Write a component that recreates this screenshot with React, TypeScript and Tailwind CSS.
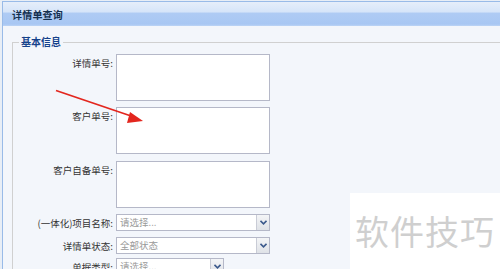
import React from 'react';

const font = { fontFamily: '"Noto Sans CJK SC", "Liberation Sans", sans-serif' };

const Label: React.FC<{ text: string }> = ({ text }) => (
  <div className="w-[100px] shrink-0 text-right text-[9.5px] leading-[12px] text-[#333] pt-[3px]">{text}</div>
);

const Chevron: React.FC = () => (
  <svg width="7" height="5" viewBox="0 0 7 5">
    <path d="M0.5 0.8 L3.5 3.8 L6.5 0.8" fill="none" stroke="#3c5a8c" strokeWidth="1.6" />
  </svg>
);

const Select: React.FC<{ text: string; wide?: boolean }> = ({ text, wide = true }) => (
  <div className={`${wide ? 'w-[154px]' : 'w-[108px]'} h-[17px] flex border border-[#b5b8c8] bg-white`}>
    <div className="flex-1 pl-[3px] text-[9.5px] leading-[15px] text-[#9a9a9a]">{text}</div>
    <div className="w-[13px] flex items-center justify-center border-l border-[#c9ccd6] bg-[linear-gradient(#f4f5f7,#dfe2e7)]">
      <Chevron />
    </div>
  </div>
);

const TextBox: React.FC = () => (
  <div className="w-[154px] h-[47px] border border-[#b5b8c8] bg-white" />
);

export default function App() {
  return (
    <div className="relative w-[500px] h-[269px] overflow-hidden bg-[#e8eef6]" style={font}>
      <div className="ml-[2px] mt-[1px] w-[520px] h-[268px] border-l border-t border-[#99bbe8] bg-[#f3f6fb]">
        {/* title bar */}
        <div className="h-[24px] flex items-center pl-[9px] bg-[linear-gradient(#e6eefa_0%,#d6e5f9_40%,#aecbf4_48%,#a8c7f3_92%,#bcd4f5_100%)]">
          <span className="text-[10px] font-bold text-[#15304f] tracking-[0.2px]">详情单查询</span>
        </div>

        <fieldset className="ml-[9px] mt-[9px] border border-[#d0d0d0] pb-[20px]">
          <legend className="ml-[6px] px-[2px] text-[10px] leading-[14px] font-bold text-[#15428b]">基本信息</legend>
          <div className="flex flex-col pt-[5px]">
            <div className="flex">
              <Label text="详情单号:" />
              <div className="ml-[3px]"><TextBox /></div>
            </div>
            <div className="flex mt-[6px]">
              <Label text="客户单号:" />
              <div className="ml-[3px]"><TextBox /></div>
            </div>
            <div className="flex mt-[7px]">
              <Label text="客户自备单号:" />
              <div className="ml-[3px]"><TextBox /></div>
            </div>
            <div className="flex mt-[6px]">
              <Label text="(一体化)项目名称:" />
              <div className="ml-[3px]"><Select text="请选择..." /></div>
            </div>
            <div className="flex mt-[6px]">
              <Label text="详情单状态:" />
              <div className="ml-[3px]"><Select text="全部状态" /></div>
            </div>
            <div className="flex mt-[4px]">
              <Label text="单据类型:" />
              <div className="ml-[3px]"><Select text="请选择..." wide={false} /></div>
            </div>
          </div>
        </fieldset>
      </div>

      {/* red annotation arrow */}
      <svg className="absolute left-0 top-0 pointer-events-none" width="500" height="269">
        <line x1="56" y1="90.5" x2="134" y2="117" stroke="#e3261e" strokeWidth="1.8" />
        <polygon points="143,121 130,112 127,123" fill="#e3261e" />
      </svg>

      {/* watermark */}
      <div className="absolute left-[350px] top-[193px] w-[150px] h-[76px] bg-white flex items-center justify-center">
        <span className="text-[34px] leading-none text-[#cfcfcf] tracking-[1px]">软件技巧</span>
      </div>
    </div>
  );
}
